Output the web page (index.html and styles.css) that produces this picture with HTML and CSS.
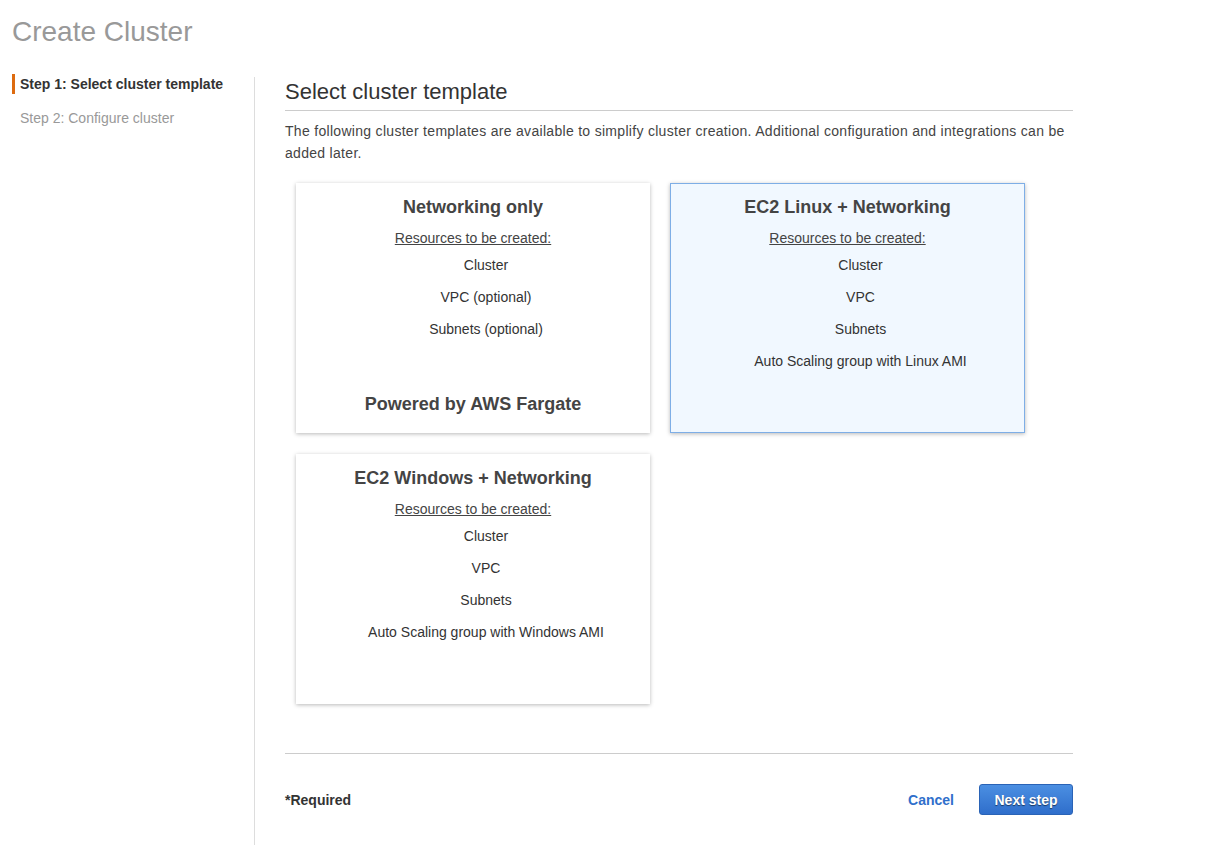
FILE: index.html
```html
<!DOCTYPE html>
<html lang="en">
<head>
<meta charset="utf-8">
<title>Create Cluster</title>
<link rel="stylesheet" href="styles.css">
</head>
<body>
<h1 class="page-title">Create Cluster</h1>
<div class="layout">
  <nav class="steps">
    <div class="step active">Step 1: Select cluster template</div>
    <div class="step">Step 2: Configure cluster</div>
  </nav>
  <main class="main">
    <h2 class="section-title">Select cluster template</h2>
    <p class="desc">The following cluster templates are available to simplify cluster creation. Additional configuration and integrations can be added later.</p>
    <div class="cards">
      <div class="card">
        <div class="card-title">Networking only</div>
        <div class="res-label">Resources to be created:</div>
        <ul class="res-list">
          <li>Cluster</li>
          <li>VPC (optional)</li>
          <li>Subnets (optional)</li>
        </ul>
        <div class="card-foot">Powered by AWS Fargate</div>
      </div>
      <div class="card selected">
        <div class="card-title">EC2 Linux + Networking</div>
        <div class="res-label">Resources to be created:</div>
        <ul class="res-list">
          <li>Cluster</li>
          <li>VPC</li>
          <li>Subnets</li>
          <li>Auto Scaling group with Linux AMI</li>
        </ul>
      </div>
      <div class="card">
        <div class="card-title">EC2 Windows + Networking</div>
        <div class="res-label">Resources to be created:</div>
        <ul class="res-list">
          <li>Cluster</li>
          <li>VPC</li>
          <li>Subnets</li>
          <li>Auto Scaling group with Windows AMI</li>
        </ul>
      </div>
    </div>
    <div class="footer">
      <span class="required">*Required</span>
      <div class="actions">
        <a class="cancel" href="#">Cancel</a>
        <button class="next" type="button">Next step</button>
      </div>
    </div>
  </main>
</div>
</body>
</html>
```

FILE: styles.css
```css
html, body {
  margin: 0;
  padding: 0;
  background: #fff;
}
body {
  font-family: "Liberation Sans", Arial, Helvetica, sans-serif;
  color: #444;
}
.page-title {
  margin: 15px 0 0 12px;
  font-size: 28px;
  line-height: 34px;
  font-weight: normal;
  color: #999;
}
.layout {
  display: flex;
  margin-top: 25px;
}
.steps {
  width: 254px;
  flex: none;
  padding-left: 12px;
  box-sizing: border-box;
}
.step {
  font-size: 14px;
  line-height: 20px;
  padding-left: 8px;
  margin-bottom: 14px;
  color: #999;
}
.step.active {
  color: #333;
  font-weight: bold;
  border-left: 3px solid #dd6b10;
  padding-left: 5px;
}
.main {
  border-left: 1px solid #ddd;
  margin-top: 3px;
  padding: 3px 0 30px 30px;
  width: 788px;
  flex: none;
}
.section-title {
  margin: 0;
  font-size: 22px;
  line-height: 24px;
  font-weight: normal;
  color: #333;
  padding-bottom: 6px;
  border-bottom: 1px solid #ccc;
}
.desc {
  margin: 9px 0 0;
  font-size: 14px;
  line-height: 22px;
  letter-spacing: 0.3px;
  color: #444;
}
.cards {
  display: grid;
  grid-template-columns: 354px 355px;
  gap: 21px 20px;
  margin: 19px 0 0 11px;
}
.card {
  height: 250px;
  box-sizing: border-box;
  border: 1px solid #fff;
  background: #fff;
  box-shadow: 0 1px 4px rgba(0, 0, 0, 0.28);
  display: flex;
  flex-direction: column;
  align-items: center;
  padding: 12px 10px 17px;
  text-align: center;
}
.card.selected {
  background: #f1f8ff;
  border-color: #7eaee6;
}
.card-title {
  font-size: 18px;
  line-height: 22px;
  font-weight: bold;
  color: #444;
}
.res-label {
  margin-top: 10px;
  font-size: 14px;
  line-height: 20px;
  text-decoration: underline;
  color: #444;
}
.res-list {
  list-style: none;
  margin: 7px 0 0;
  padding: 0 0 0 26px;
  font-size: 14px;
  line-height: 20px;
  color: #333;
}
.res-list li {
  margin-bottom: 12px;
}
.card-foot {
  margin-top: auto;
  font-size: 18px;
  line-height: 22px;
  font-weight: bold;
  color: #444;
}
.footer {
  margin-top: 49px;
  border-top: 1px solid #ccc;
  padding-top: 30px;
  display: flex;
  justify-content: space-between;
  align-items: center;
}
.required {
  font-size: 14px;
  font-weight: bold;
  color: #333;
}
.actions {
  display: flex;
  align-items: center;
  gap: 25px;
}
.cancel {
  font-size: 14px;
  font-weight: bold;
  color: #2f6fcb;
  text-decoration: none;
}
.next {
  font-family: "Liberation Sans", Arial, Helvetica, sans-serif;
  width: 94px;
  height: 31px;
  border: 1px solid #2a63b6;
  border-radius: 3px;
  background: linear-gradient(#4b8fe2, #2f6ecb);
  color: #fff;
  font-size: 14px;
  font-weight: bold;
  text-shadow: 0 1px 1px rgba(0, 0, 0, 0.55);
  padding: 0;
  cursor: pointer;
}
```
